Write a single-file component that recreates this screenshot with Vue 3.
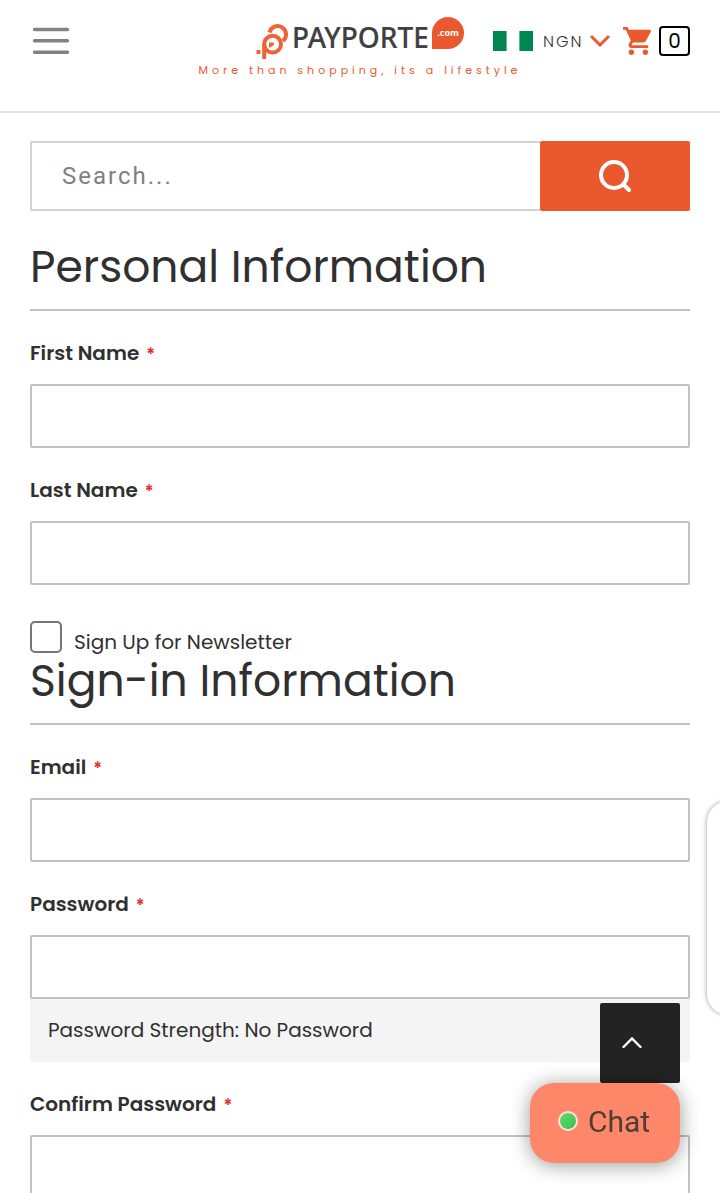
<template>
  <div class="page">
    <header class="header">
      <button class="menu" type="button" aria-label="Menu">
        <svg width="38" height="28" viewBox="0 0 38 28">
          <path d="M2.5 2.5h33M2.5 13.7h33M2.5 25.2h33" stroke="#828282" stroke-width="3.4" stroke-linecap="round" />
        </svg>
      </button>

      <a class="logo" href="#" aria-label="Payporte">
        <svg width="208" height="44" viewBox="0 0 208 44">
          <g fill="none" stroke="#ee6338" stroke-width="4">
            <path d="M13.5 16.500A8.400 8.400 0 1 1 27 25" />
            <circle cx="16.600" cy="28.200" r="8.400" />
            <path d="M8.200 43V28" />
          </g>
          <path d="M13 26.500h4.600a2.600 2.600 0 0 1-.8 3.500L13 31.800z" fill="#ee6338" />
          <rect x="0.5" y="34" width="4" height="4" rx="0.6" fill="#ee6338" />
          <text class="logo-name" x="36" y="32">PAYPORTE</text>
          <path d="M176 33V17a16 16 0 1 1 16 16z" fill="#e9592d" />
          <text class="logo-com" x="192" y="20" text-anchor="middle">.com</text>
        </svg>
      </a>

      <div class="tools">
        <svg class="flag" width="40" height="20" viewBox="0 0 40 20">
          <path d="M0 0h13.6v20H0zM26.4 0H40v20H26.4z" fill="#008751" />
        </svg>
        <div class="currency">
          <select v-model="currency" aria-label="Currency">
            <option>NGN</option>
          </select>
          <svg width="20" height="14" viewBox="0 0 20 14">
            <path d="M1 2l9 9 9-9" fill="none" stroke="#e9592d" stroke-width="3" />
          </svg>
        </div>
        <a class="cart" href="#" aria-label="Cart">
          <svg width="28" height="28" viewBox="1 2 20 20">
            <path
              d="M7 18c-1.1 0-1.99.9-1.99 2S5.9 22 7 22s2-.9 2-2-.9-2-2-2zM1 2v2h2l3.6 7.59-1.35 2.45c-.16.28-.25.61-.25.96 0 1.1.9 2 2 2h12v-2H7.42c-.14 0-.25-.11-.25-.25l.03-.12.9-1.63h7.45c.75 0 1.41-.41 1.75-1.03l3.58-6.49c.08-.14.12-.31.12-.48 0-.55-.45-1-1-1H5.21l-.94-2H1zm16 16c-1.1 0-1.99.9-1.99 2s.89 2 1.99 2 2-.9 2-2-.9-2-2-2z"
              fill="#e9592d"
            />
          </svg>
          <span class="count">{{ cartCount }}</span>
        </a>
      </div>

      <p class="tagline">More than shopping, its a lifestyle</p>
    </header>

    <main class="content">
      <form class="search" role="search" @submit.prevent>
        <input v-model="query" type="text" placeholder="Search..." aria-label="Search" />
        <button type="submit" aria-label="Search">
          <svg width="34" height="34" viewBox="0 0 34 34">
            <circle cx="16" cy="16" r="13" fill="none" stroke="#fff" stroke-width="4" />
            <path d="M25.5 25.5l5.500 5.500" stroke="#fff" stroke-width="4" stroke-linecap="round" />
          </svg>
        </button>
      </form>

      <form class="account" @submit.prevent>
        <section>
          <h2>Personal Information</h2>
          <div v-for="field in personalFields" :key="field.id" class="field">
            <label :for="field.id">{{ field.label }}<span class="required">*</span></label>
            <input :id="field.id" v-model="form[field.id]" :type="field.type" />
          </div>
          <div class="newsletter">
            <input id="newsletter" v-model="form.newsletter" type="checkbox" />
            <label for="newsletter">Sign Up for Newsletter</label>
          </div>
        </section>

        <section>
          <h2>Sign-in Information</h2>
          <div v-for="field in signInFields" :key="field.id" class="field">
            <label :for="field.id">{{ field.label }}<span class="required">*</span></label>
            <input :id="field.id" v-model="form[field.id]" :type="field.type" />
            <div v-if="field.id === 'password'" class="strength">Password Strength: {{ strength }}</div>
          </div>
        </section>
      </form>
    </main>

    <div class="side-tab"></div>
    <button class="to-top" type="button" aria-label="Back to top" @click="toTop">
      <svg width="20" height="12" viewBox="0 0 20 12">
        <path d="M1.5 10L10 1.500l8.500 8.500" fill="none" stroke="#fff" stroke-width="2.400" stroke-linecap="round" />
      </svg>
    </button>
    <button class="chat" type="button"><span class="status"></span>Chat</button>
  </div>
</template>

<script setup>
import { ref, reactive, computed } from 'vue'

const currency = ref('NGN')
const cartCount = ref(0)
const query = ref('')

const personalFields = [
  { id: 'firstname', label: 'First Name', type: 'text' },
  { id: 'lastname', label: 'Last Name', type: 'text' },
]

const signInFields = [
  { id: 'email', label: 'Email', type: 'email' },
  { id: 'password', label: 'Password', type: 'password' },
  { id: 'confirmation', label: 'Confirm Password', type: 'password' },
]

const form = reactive({
  firstname: '',
  lastname: '',
  newsletter: false,
  email: '',
  password: '',
  confirmation: '',
})

const strength = computed(() => {
  const length = form.password.length
  if (!length) return 'No Password'
  if (length < 8) return 'Weak'
  return length < 12 ? 'Medium' : 'Strong'
})

function toTop() {
  window.scrollTo({ top: 0, behavior: 'smooth' })
}
</script>

<style>
body {
  margin: 0;
  background: #fff;
}
</style>

<style scoped>
.page {
  height: 100vh;
  overflow: hidden;
  color: #303030;
  font-family: Poppins, Inter, 'Open Sans', sans-serif;
  font-size: 20px;
}

.page * {
  box-sizing: border-box;
}

button,
input,
select {
  margin: 0;
  padding: 0;
  border: 0;
  border-radius: 0;
  background: none;
  color: inherit;
  font: inherit;
}

svg {
  display: block;
}

.header {
  display: grid;
  grid-template-columns: 1fr auto 1fr;
  align-items: center;
  padding: 16px 30px 33px;
  border-bottom: 2px solid #e3e3e3;
}

.menu {
  justify-self: start;
  padding: 6px 2px 0;
}

.logo-name {
  font: 500 28px 'Noto Sans', sans-serif;
  fill: #404041;
  stroke: #404041;
  stroke-width: 0.2px;
}

.logo-com {
  font: 700 9px 'Open Sans', sans-serif;
  fill: #fff;
}

.tools {
  display: flex;
  align-items: center;
  justify-self: end;
  gap: 10px;
  padding-top: 6px;
}

.currency {
  display: flex;
  align-items: center;
  gap: 6px;
  color: #333;
  font-size: 16px;
}

.currency select {
  appearance: none;
  font-weight: 300;
  letter-spacing: 2px;
}

.cart {
  display: flex;
  align-items: center;
  gap: 8px;
  padding-left: 3px;
  color: #000;
  text-decoration: none;
}

.count {
  width: 31px;
  border: 2px solid #000;
  border-radius: 4px;
  line-height: 26px;
  text-align: center;
}

.tagline {
  grid-column: 1 / -1;
  margin: 2px 0 0;
  color: #e9592d;
  font-size: 11px;
  font-weight: 400;
  line-height: 16px;
  letter-spacing: 4px;
  text-align: center;
}

.content {
  padding: 28px 30px 0;
}

.search {
  display: flex;
  height: 70px;
}

.search input {
  flex: 1;
  min-width: 0;
  padding: 0 30px;
  border: 2px solid #d3d3d3;
  border-right: 0;
  border-radius: 2px 0 0 2px;
  font-family: Roboto, sans-serif;
  font-size: 24px;
  letter-spacing: 2px;
}

.search input::placeholder {
  color: #808080;
}

.search button {
  display: flex;
  align-items: center;
  justify-content: center;
  width: 150px;
  border-radius: 2px;
  background: #e9592d;
}

.account {
  padding-top: 28px;
}

h2 {
  margin: 0;
  padding-bottom: 14px;
  border-bottom: 2px solid #c2c2c2;
  font-size: 44px;
  font-weight: 400;
  line-height: 56px;
}

.field {
  padding-top: 27px;
}

.field label {
  display: block;
  margin-bottom: 16px;
  font-weight: 600;
  line-height: 30px;
}

.required {
  margin-left: 7px;
  color: #e02b27;
  font-size: 17px;
  line-height: 1;
}

.field input {
  display: block;
  width: 100%;
  height: 64px;
  padding: 0 16px;
  border: 2px solid #c2c2c2;
  border-radius: 2px;
}

.newsletter {
  display: flex;
  align-items: flex-end;
  gap: 12px;
  padding-top: 36px;
}

.newsletter input {
  appearance: none;
  width: 32px;
  height: 32px;
  border: 2px solid #767676;
  border-radius: 5px;
}

.newsletter input:checked {
  background: #e9592d;
}

.newsletter label {
  line-height: 22px;
}

.strength {
  padding: 0 18px;
  background: #f4f4f4;
  line-height: 63px;
}

.side-tab {
  position: fixed;
  right: -30px;
  bottom: 178px;
  width: 43px;
  height: 214px;
  border-radius: 30px;
  background: #fff;
  box-shadow: 0 0 5px rgba(0, 0, 0, 0.4);
}

.to-top {
  position: fixed;
  right: 40px;
  bottom: 110px;
  width: 80px;
  height: 80px;
  padding-left: 22px;
  border-radius: 2px;
  background: #232323;
}

.chat {
  position: fixed;
  right: 40px;
  bottom: 30px;
  display: flex;
  align-items: center;
  justify-content: center;
  gap: 10px;
  width: 150px;
  height: 80px;
  padding: 0 2px 4px 0;
  border-radius: 24px;
  background: #ff8769;
  box-shadow: 0 2px 20px rgba(0, 0, 0, 0.4);
  color: #4d3d38;
  font-family: Roboto, sans-serif;
  font-size: 30px;
}

.status {
  width: 20px;
  height: 20px;
  border: 2px solid #fbe3dc;
  border-radius: 50%;
  background: linear-gradient(135deg, #6fd673, #2fc648);
}
</style>
